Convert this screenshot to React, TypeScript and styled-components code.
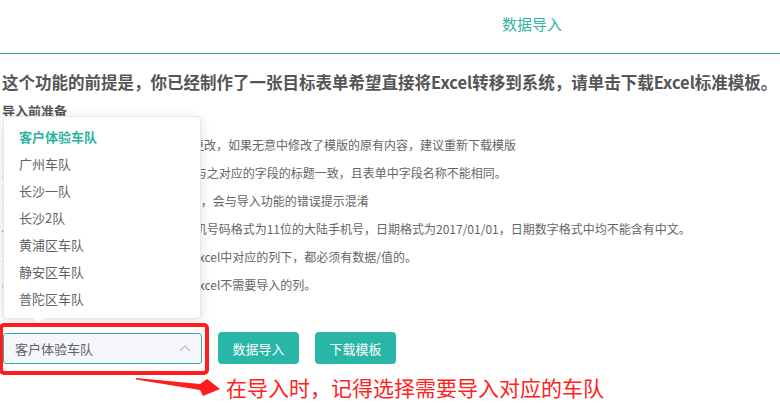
import styled, { createGlobalStyle } from "styled-components";

const GlobalStyle = createGlobalStyle`
  body {
    margin: 0;
    background: #fff;
    font-family: "Noto Sans CJK SC", "Noto Sans", sans-serif;
  }
`;

const Page = styled.div`
  width: 780px;
  height: 410px;
  overflow: hidden;
`;
const TopBar = styled.div`
  height: 53px;
  border-bottom: 1px solid #3ea99c;
  display: flex;
  align-items: center;
  padding-left: 502px;
`;
const Title = styled.div`
  font-size: 15px;
  color: #35b2a3;
  margin-top: -7px;
`;
const Content = styled.div`
  padding-left: 2px;
`;
const Heading = styled.h1`
  margin: 15px 0 0;
  font-size: 16.5px;
  line-height: 26px;
  font-weight: 700;
  color: #555;
  white-space: nowrap;
`;
const SubHeading = styled.h2`
  margin: 6px 0 0;
  font-size: 13px;
  line-height: 20px;
  font-weight: 700;
  color: #555;
`;
const List = styled.ul`
  list-style: none;
  margin: 10px 0 0;
  padding: 0;
`;
const Item = styled.li`
  font-size: 12px;
  line-height: 28px;
  color: #666;
  white-space: nowrap;
`;
const Actions = styled.div`
  display: flex;
  align-items: center;
  gap: 16px;
  margin-top: 33px;
  padding-left: 1px;
`;
const SelectWrap = styled.div`
  position: relative;
  width: 199px;
`;
const Select = styled.div`
  height: 29px;
  border: 1px solid #3aaf9f;
  border-radius: 3px;
  background: #f4f6f9;
  display: flex;
  align-items: center;
  justify-content: space-between;
  padding: 0 10px 0 11px;
  font-size: 13px;
  color: #606266;
`;
const Highlight = styled.div`
  position: absolute;
  top: -10px;
  left: -4px;
  right: -7px;
  bottom: -11px;
  border: 4px solid #ff1c1c;
  border-radius: 5px;
  pointer-events: none;
`;
const Dropdown = styled.ul`
  position: absolute;
  left: 0;
  bottom: calc(100% + 14px);
  width: 198px;
  margin: 0;
  padding: 6px 0;
  list-style: none;
  background: #fff;
  border: 1px solid #e4e7ed;
  border-radius: 4px;
  box-shadow: 0 2px 12px rgba(0, 0, 0, 0.12);
  box-sizing: border-box;
  &::after {
    content: "";
    position: absolute;
    left: 30px;
    bottom: -5px;
    width: 8px;
    height: 8px;
    background: #fff;
    border-right: 1px solid #e4e7ed;
    border-bottom: 1px solid #e4e7ed;
    transform: rotate(45deg);
  }
`;
const Option = styled.li<{ $active?: boolean }>`
  height: 27px;
  line-height: 27px;
  padding-left: 15px;
  font-size: 13px;
  color: ${(p) => (p.$active ? "#2eb3a2" : "#606266")};
  font-weight: ${(p) => (p.$active ? 700 : 400)};
`;
const Button = styled.button`
  height: 32px;
  width: 81px;
  border: none;
  border-radius: 4px;
  background: #29b6a6;
  color: #fff;
  font-family: inherit;
  font-size: 13px;
  padding: 0;
`;
const Note = styled.div`
  display: flex;
  align-items: center;
  gap: 4px;
  margin-top: 9px;
  padding-left: 132px;
`;
const NoteText = styled.span`
  font-size: 21px;
  line-height: 28px;
  color: #ff2222;
`;

const teams = [
  "客户体验车队",
  "广州车队",
  "长沙一队",
  "长沙2队",
  "黄浦区车队",
  "静安区车队",
  "普陀区车队",
];

const rules = [
  "1.模板中的表头名称和格式请勿随意更改，如果无意中修改了模版的原有内容，建议重新下载模版",
  "2. 模板中的各列表头名称须和系统中与之对应的字段的标题一致，且表单中字段名称不能相同。",
  "3、请勿在表格中添加任何批注等内容，会与导入功能的错误提示混淆",
  "4. 请注意数据格式的正确性，其中手机号码格式为11位的大陆手机号，日期格式为2017/01/01，日期数字格式中均不能含有中文。",
  "5.被设置为必填项的字段，在导入的Excel中对应的列下，都必须有数据/值的。",
  "6.在导入之前，请务必先删除掉所有Excel不需要导入的列。",
];

const Chevron = () => (
  <svg width="12" height="8" viewBox="0 0 12 8">
    <path d="M1 7 L6 2 L11 7" fill="none" stroke="#c0c4cc" strokeWidth="1.3" />
  </svg>
);

const Arrow = () => (
  <svg width="88" height="26" viewBox="0 0 88 26">
    <polygon
      points="2,4 66,10 73,5 86,15 69,22 66,16 2,5.5"
      fill="#ff1c1c"
    />
  </svg>
);

export default function App() {
  return (
    <Page>
      <GlobalStyle />
      <TopBar>
        <Title>数据导入</Title>
      </TopBar>
      <Content>
        <Heading>
          这个功能的前提是，你已经制作了一张目标表单希望直接将Excel转移到系统，请单击下载Excel标准模板。
        </Heading>
        <SubHeading>导入前准备</SubHeading>
        <List>
          {rules.map((r) => (
            <Item key={r}>{r}</Item>
          ))}
        </List>
        <Actions>
          <SelectWrap>
            <Dropdown>
              {teams.map((t, i) => (
                <Option key={t} $active={i === 0}>
                  {t}
                </Option>
              ))}
            </Dropdown>
            <Select>
              <span>客户体验车队</span>
              <Chevron />
            </Select>
            <Highlight />
          </SelectWrap>
          <Button>数据导入</Button>
          <Button>下载模板</Button>
        </Actions>
        <Note>
          <Arrow />
          <NoteText>在导入时，记得选择需要导入对应的车队</NoteText>
        </Note>
      </Content>
    </Page>
  );
}
